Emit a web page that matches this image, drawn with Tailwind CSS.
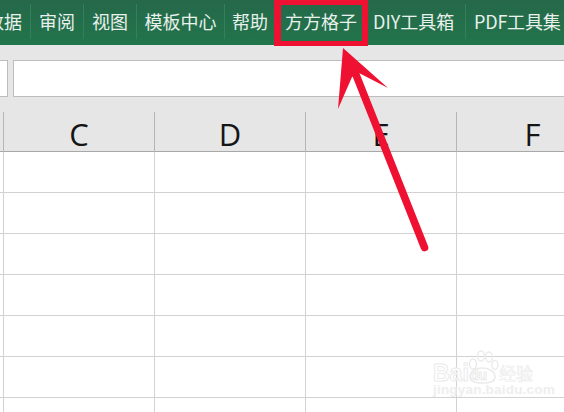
<!DOCTYPE html>
<html lang="zh">
<head>
    <meta charset="UTF-8">
    <title>方方格子</title>
    <script src="https://cdn.jsdelivr.net/npm/@tailwindcss/browser@4"></script>
</head>
<body class="bg-white">
    <div class="relative w-[564px] h-[412px] overflow-hidden bg-white font-['Noto_Sans_CJK_SC',sans-serif]">
        <!-- Ribbon tabs -->
        <div class="flex h-[45px] items-start pt-[4px] bg-gradient-to-b from-[#25684a] to-[#21754b] text-[18px] leading-[35px] text-[#e8f1ec]">
            <span class="w-[31px] text-right pr-[8px] whitespace-nowrap overflow-hidden shrink-0 border-r border-[#35805c]" dir="rtl">数据</span>
            <span class="w-[53px] text-center shrink-0 border-r border-[#35805c]">审阅</span>
            <span class="w-[53px] text-center shrink-0 border-r border-[#35805c]">视图</span>
            <span class="w-[88px] text-center shrink-0 border-r border-[#35805c]">模板中心</span>
            <span class="w-[50px] text-center shrink-0">帮助</span>
            <span class="w-[99px] pl-[10px] shrink-0 whitespace-nowrap">方方格子</span>
            <span class="w-[92px] ml-[-1px] shrink-0 whitespace-nowrap">DIY工具箱</span>
            <span class="pl-[8px] whitespace-nowrap border-l border-[#35805c] tracking-[-0.2px]">PDF工具集</span>
        </div>
        <!-- Formula bar -->
        <div class="flex h-[67px] gap-[5px] bg-[#e6e6e6] pt-[15px]">
            <div class="h-[37px] w-[8px] border border-l-0 border-[#bdbdbd] bg-white"></div>
            <div class="h-[37px] flex-1 border border-r-0 border-[#bdbdbd] bg-white"></div>
        </div>
        <!-- Column headers -->
        <div class="grid grid-cols-[4px_151px_151px_151px_151px] h-[40px] bg-[#e6e6e6] border-b border-[#a8a8a8] text-[31px] leading-[45px] text-[#151515] text-center font-['Open_Sans',sans-serif]">
            <div class="border-r border-[#b5b5b5]"></div>
            <div class="border-r border-[#b5b5b5]">C</div>
            <div class="border-r border-[#b5b5b5]">D</div>
            <div class="border-r border-[#b5b5b5]">E</div>
            <div>F</div>
        </div>
        <!-- Cell rows -->
        <div class="grid grid-cols-[4px_151px_151px_151px_1fr] auto-rows-[41px]">
            <div class="border-r border-b border-[#d2d2d2]"></div><div class="border-r border-b border-[#d2d2d2]"></div><div class="border-r border-b border-[#d2d2d2]"></div><div class="border-r border-b border-[#d2d2d2]"></div><div class="border-b border-[#d2d2d2]"></div>
            <div class="border-r border-b border-[#d2d2d2]"></div><div class="border-r border-b border-[#d2d2d2]"></div><div class="border-r border-b border-[#d2d2d2]"></div><div class="border-r border-b border-[#d2d2d2]"></div><div class="border-b border-[#d2d2d2]"></div>
            <div class="border-r border-b border-[#d2d2d2]"></div><div class="border-r border-b border-[#d2d2d2]"></div><div class="border-r border-b border-[#d2d2d2]"></div><div class="border-r border-b border-[#d2d2d2]"></div><div class="border-b border-[#d2d2d2]"></div>
            <div class="border-r border-b border-[#d2d2d2]"></div><div class="border-r border-b border-[#d2d2d2]"></div><div class="border-r border-b border-[#d2d2d2]"></div><div class="border-r border-b border-[#d2d2d2]"></div><div class="border-b border-[#d2d2d2]"></div>
            <div class="border-r border-b border-[#d2d2d2]"></div><div class="border-r border-b border-[#d2d2d2]"></div><div class="border-r border-b border-[#d2d2d2]"></div><div class="border-r border-b border-[#d2d2d2]"></div><div class="border-b border-[#d2d2d2]"></div>
            <div class="border-r border-b border-[#d2d2d2]"></div><div class="border-r border-b border-[#d2d2d2]"></div><div class="border-r border-b border-[#d2d2d2]"></div><div class="border-r border-b border-[#d2d2d2]"></div><div class="border-b border-[#d2d2d2]"></div>
            <div class="border-r border-b border-[#d2d2d2]"></div><div class="border-r border-b border-[#d2d2d2]"></div><div class="border-r border-b border-[#d2d2d2]"></div><div class="border-r border-b border-[#d2d2d2]"></div><div class="border-b border-[#d2d2d2]"></div>
        </div>
        <!-- Red highlight box -->
        <div class="absolute left-[274px] top-0 w-[94px] h-[46px] border-[6px] border-l-[7px] border-t-[5px] border-b-[5px] border-[#ee1131]"></div>
        <!-- Red arrow -->
        <svg class="absolute left-0 top-0" width="564" height="412" viewBox="0 0 564 412" fill="none">
            <path d="M352 75L359 72L428 246A3.7 3.7 0 0 1 421 249Z" fill="#ee1131"/>
            <path d="M343 48L388 88L359 73L352 77L338 109Z" fill="#ee1131"/>
        </svg>
        <!-- Watermark -->
        <svg class="absolute left-[466px] top-[349px]" width="34" height="36" viewBox="0 0 34 36" fill="none" stroke="#ebebeb" stroke-width="1.5">
            <ellipse cx="7" cy="15" rx="3.5" ry="5"/>
            <ellipse cx="15" cy="7" rx="3.5" ry="5"/>
            <ellipse cx="23" cy="8" rx="3.5" ry="5"/>
            <ellipse cx="29" cy="16" rx="3" ry="4.5"/>
            <path d="M4 28C4 21 11 19 16 19C22 19 29 22 29 28C29 33 24 34 16 34C9 34 4 33 4 28Z"/>
        </svg>
        <div class="absolute left-[433px] top-[362px] w-[104px] font-['Liberation_Sans',sans-serif] text-white">
            <div class="relative h-[23px] text-[23px] font-bold leading-[23px] [-webkit-text-stroke:1px_#ebebeb]">Bai<span class="absolute left-[37px] top-[6px] text-[14px] leading-[15px]">du</span><span class="absolute left-[66px] top-[1px] text-[17px] leading-[20px] font-['Noto_Sans_CJK_SC',sans-serif] font-normal [-webkit-text-stroke:0.6px_#ebebeb]">经验</span></div>
            <div class="text-[13.5px] leading-[14px] mt-[-2px] tracking-[0.2px] text-[#eeeeee] font-bold whitespace-nowrap">jingyan.baidu.com</div>
        </div>
    </div>
</body>
</html>
